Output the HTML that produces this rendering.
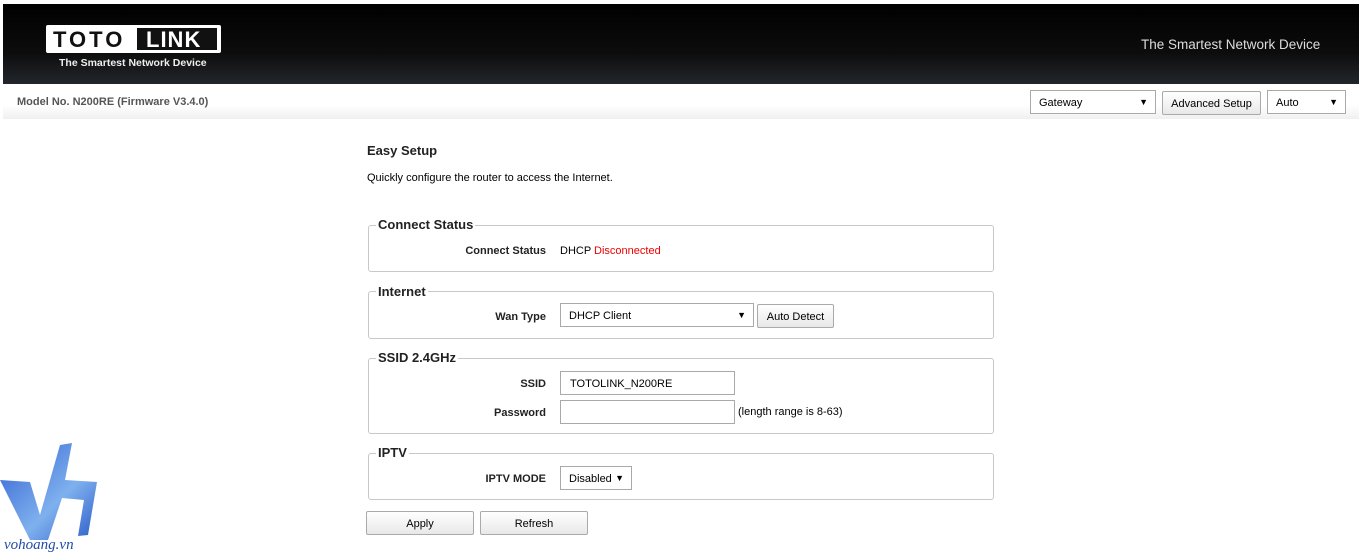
<!DOCTYPE html>
<html><head><style>
*{box-sizing:border-box;margin:0;padding:0}
body{width:1364px;height:553px;background:#fff;font-family:"Liberation Sans",Arial,sans-serif;font-size:12px;color:#000;position:relative;overflow:hidden}
.a{position:absolute}
.hdr{left:3px;top:4px;width:1356px;height:80px;background:linear-gradient(#000 0%,#0c0c0c 60%,#22262b 100%)}
.bar{left:3px;top:84px;width:1356px;height:35px;background:linear-gradient(#fff,#fff 60%,#f0f0f0)}
.sel{border:1px solid #a9a9a9;background:#fff;height:24px;padding:1px 8px 0;line-height:22px;font-size:11px}
.sel:after{content:"\25BC";position:absolute;right:7px;top:0;font-size:9px}
.btn{border:1px solid #aaa;background:linear-gradient(#fff,#e8e8e8);height:24px;text-align:center;line-height:23px;padding-top:1px;font-size:11px;border-radius:2px}
.fs{border:1px solid #c8c8c8;border-radius:3px;left:368px;width:626px}
.lg{background:#fff;font-size:13px;font-weight:bold;color:#222;padding:0 2px;left:376px}
.lb{font-weight:bold;font-size:11px;text-align:right;width:180px;color:#222}
.inp{border:1px solid #a9a9a9;background:#fff;height:24px;padding:1px 9px 0;line-height:22px;font-size:11px}
</style></head><body>
<div class="a hdr"></div>
<div class="a" style="left:46px;top:25px;width:175px;height:28px;background:#fff;border-radius:2px"></div>
<div class="a" style="left:137px;top:28px;width:80px;height:22px;background:#111"></div>
<div class="a" style="left:53px;top:26px;font-size:22px;font-weight:bold;letter-spacing:3px;color:#111;line-height:28px">TOTO</div>
<div class="a" style="left:146px;top:26px;font-size:22px;font-weight:bold;letter-spacing:1px;color:#fff;line-height:28px">LINK</div>
<div class="a" style="left:59px;top:57px;font-size:10.5px;font-weight:bold;color:#eee">The Smartest Network Device</div>
<div class="a" style="left:1141px;top:37px;font-size:13.5px;color:#ddd">The Smartest Network Device</div>
<div class="a bar"></div>
<div class="a" style="left:17px;top:96px;font-size:11px;font-weight:bold;color:#555">Model No. N200RE (Firmware V3.4.0)</div>
<div class="a sel" style="left:1030px;top:90px;width:126px">Gateway</div>
<div class="a btn" style="left:1162px;top:91px;width:99px">Advanced Setup</div>
<div class="a sel" style="left:1267px;top:90px;width:79px">Auto</div>

<div class="a" style="left:367px;top:143px;font-size:13px;font-weight:bold;color:#222">Easy Setup</div>
<div class="a" style="left:367px;top:172px;font-size:11px">Quickly configure the router to access the Internet.</div>

<div class="a fs" style="top:225px;height:47px"></div>
<div class="a lg" style="top:217px">Connect Status</div>
<div class="a lb" style="left:366px;top:245px">Connect Status</div>
<div class="a" style="left:560px;top:245px;font-size:11px">DHCP <span style="color:#e00">Disconnected</span></div>

<div class="a fs" style="top:291px;height:48px"></div>
<div class="a lg" style="top:284px">Internet</div>
<div class="a lb" style="left:366px;top:311px">Wan Type</div>
<div class="a sel" style="left:560px;top:303px;width:194px">DHCP Client</div>
<div class="a btn" style="left:757px;top:304px;width:77px">Auto Detect</div>

<div class="a fs" style="top:358px;height:76px"></div>
<div class="a lg" style="top:350px">SSID 2.4GHz</div>
<div class="a lb" style="left:366px;top:378px">SSID</div>
<div class="a inp" style="left:560px;top:371px;width:175px">TOTOLINK_N200RE</div>
<div class="a lb" style="left:366px;top:407px">Password</div>
<div class="a inp" style="left:560px;top:400px;width:175px"></div>
<div class="a" style="left:738px;top:406px;font-size:11px">(length range is 8-63)</div>

<div class="a fs" style="top:453px;height:47px"></div>
<div class="a lg" style="top:445px">IPTV</div>
<div class="a lb" style="left:366px;top:473px">IPTV MODE</div>
<div class="a sel" style="left:560px;top:466px;width:72px">Disabled</div>

<div class="a btn" style="left:366px;top:511px;width:108px">Apply</div>
<div class="a btn" style="left:480px;top:511px;width:108px">Refresh</div>

<svg class="a" style="left:0;top:440px" width="105" height="113" viewBox="0 0 105 113">
<defs><linearGradient id="g" x1="0" y1="0" x2="1" y2="1"><stop offset="0" stop-color="#2f5fd0"/><stop offset="0.6" stop-color="#7fb0ee"/><stop offset="1" stop-color="#2a5cc8"/></linearGradient></defs>
<polygon points="0,40 30,42 40,75 60,5 72,3 65,40 97,42 88,95 78,96 84,60 62,58 48,100 30,100" fill="url(#g)"/>
<text x="4" y="109" font-family="Liberation Serif,serif" font-style="italic" font-size="15" fill="#1f4aa8">vohoang.vn</text>
</svg>
</body></html>
